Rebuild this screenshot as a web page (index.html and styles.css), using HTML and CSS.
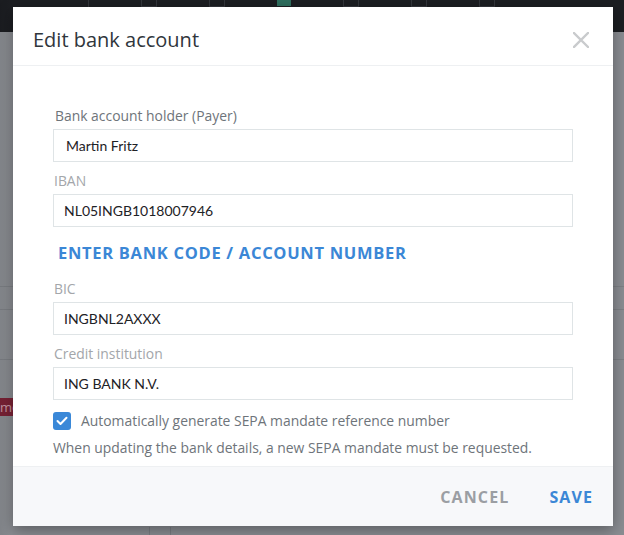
FILE: index.html
```html
<!DOCTYPE html>
<html lang="en">
<head>
    <meta charset="UTF-8">
    <meta name="viewport" content="width=device-width, initial-scale=1.0">
    <title>Edit bank account</title>
    <link rel="stylesheet" href="styles.css">
</head>
<body>
    <!-- page behind the modal -->
    <div class="page">
        <div class="topbar">
            <span class="tb-icon tb-sep"></span>
            <span class="tb-icon"></span>
            <span class="tb-icon"></span>
            <span class="tb-icon tb-active"></span>
            <span class="tb-icon"></span>
            <span class="tb-icon"></span>
            <span class="tb-icon"></span>
        </div>
        <div class="page-row" style="height: 254px"></div>
        <div class="page-row" style="height: 22px"></div>
        <div class="page-row" style="height: 49px"></div>
        <div class="page-badge-row"><span class="badge">more</span></div>
        <div class="page-bottom">
            <span class="vline"></span>
            <span class="vline"></span>
        </div>
    </div>
    <div class="overlay"></div>

    <div class="modal">
        <div class="modal-header">
            <h2 class="modal-title">Edit bank account</h2>
            <button class="close-btn" aria-label="Close">
                <svg width="16" height="16" viewBox="0 0 16 16">
                    <path d="M1 1 L15 15 M15 1 L1 15" stroke="#c9cbcd" stroke-width="2.4" stroke-linecap="square"/>
                </svg>
            </button>
        </div>

        <div class="modal-body">
            <div class="field">
                <label class="label label-dark">Bank account holder (Payer)</label>
                <div class="input input-indent">Martin Fritz</div>
            </div>
            <div class="field">
                <label class="label">IBAN</label>
                <div class="input">NL05INGB1018007946</div>
            </div>

            <a class="link" href="#">ENTER BANK CODE / ACCOUNT NUMBER</a>

            <div class="field">
                <label class="label">BIC</label>
                <div class="input">INGBNL2AXXX</div>
            </div>
            <div class="field">
                <label class="label">Credit institution</label>
                <div class="input">ING BANK N.V.</div>
            </div>

            <div class="check-row">
                <span class="checkbox">
                    <svg width="12" height="10" viewBox="0 0 12 10">
                        <path d="M1.5 5 L4.5 8 L10.5 1.8" fill="none" stroke="#fff" stroke-width="2" stroke-linecap="round" stroke-linejoin="round"/>
                    </svg>
                </span>
                <span class="check-text">Automatically generate SEPA mandate reference number</span>
            </div>
            <p class="note">When updating the bank details, a new SEPA mandate must be requested.</p>
        </div>

        <div class="modal-footer">
            <button class="btn btn-cancel">CANCEL</button>
            <button class="btn btn-save">SAVE</button>
        </div>
    </div>
</body>
</html>
```

FILE: styles.css
```css
html, body { margin: 0; height: 100%; }
body {
    font-family: "Open Sans", Lato, sans-serif;
    background: #8a8d92;
    overflow: hidden;
    position: relative;
}

/* background page */
.page { height: 100%; }
.topbar {
    height: 32px;
    background: #1c1e22;
    display: flex;
    gap: 52px;
    padding-left: 60px;
}
.tb-icon { width: 14px; height: 6px; border: 1px solid #33363b; border-top: none; }
.tb-sep { border: none; border-right: 1px solid #33363b; height: 100%; width: 28px; }
.tb-active { background: #2f6f5f; border: none; height: 6px; }
.page-row { border-bottom: 1px solid #7d8085; }
.page-badge-row { padding-top: 35px; }
.badge {
    display: inline-block;
    background: #7a2236;
    color: #c79aa6;
    font-size: 13px;
    line-height: 18px;
    padding: 0 6px 0 0;
}
.page-bottom { display: flex; gap: 20px; padding: 110px 0 0 149px; }
.vline { width: 1px; height: 20px; background: #7a7d82; }
.overlay {
    position: absolute;
    inset: 0;
    background: linear-gradient(90deg, rgba(0,0,0,0.06), rgba(0,0,0,0) 12px);
}

/* modal */
.modal {
    position: absolute;
    left: 13px;
    top: 7px;
    width: 600px;
    height: 519px;
    background: #fff;
    box-shadow: 0 4px 14px rgba(0, 0, 0, 0.35);
    display: flex;
    flex-direction: column;
}
.modal-header {
    height: 59px;
    border-bottom: 1px solid #eef0f2;
    display: flex;
    align-items: center;
    justify-content: space-between;
    padding: 7px 23px 0 20px;
    box-sizing: border-box;
}
.modal-title {
    margin: 0;
    font-weight: 400;
    font-size: 20px;
    color: #30363c;
}
.close-btn {
    background: none;
    border: none;
    padding: 0;
    width: 18px;
    height: 18px;
    display: flex;
    align-items: center;
    justify-content: center;
    cursor: pointer;
}
.modal-body {
    flex: 1;
    padding: 42px 40px 0 40px;
}
.field { margin-bottom: 11px; }
.label {
    display: block;
    font-size: 13.9px;
    line-height: 16px;
    color: #a3a6aa;
    margin-bottom: 5px;
    padding-left: 1px;
}
.label-dark { color: #6e747a; padding-left: 2px; }
.input {
    height: 33px;
    border: 1px solid #dfe4e6;
    box-sizing: border-box;
    padding: 0 10px;
    font-family: Lato, sans-serif;
    font-size: 14px;
    line-height: 31px;
    color: #1e2226;
}
.input-indent { padding-left: 12px; }
.link {
    display: block;
    margin: 16px 0 18px 5px;
    font-weight: 700;
    font-size: 16.5px;
    line-height: 20px;
    color: #3b87d6;
    text-decoration: none;
    letter-spacing: 0.7px;
}
.check-row {
    display: flex;
    align-items: center;
    gap: 10px;
    margin-top: 11px;
}
.checkbox {
    width: 18px;
    height: 18px;
    border-radius: 3px;
    background: #3a88d8;
    display: flex;
    align-items: center;
    justify-content: center;
}
.check-text { font-size: 13.9px; color: #6e747a; }
.note {
    margin: 10px 0 0;
    font-size: 13.9px;
    line-height: 16px;
    color: #6e747a;
}
.modal-footer {
    height: 60px;
    background: #f7f8fa;
    border-top: 1px solid #eef0f2;
    display: flex;
    align-items: center;
    justify-content: flex-end;
    gap: 40px;
    padding-right: 20px;
    box-sizing: border-box;
}
.btn {
    background: none;
    border: none;
    padding: 0;
    font-family: "Open Sans", sans-serif;
    font-weight: 700;
    font-size: 16px;
    letter-spacing: 1.1px;
    cursor: pointer;
}
.btn-cancel { color: #9b9ea3; }
.btn-save { color: #3b87d6; }
```
